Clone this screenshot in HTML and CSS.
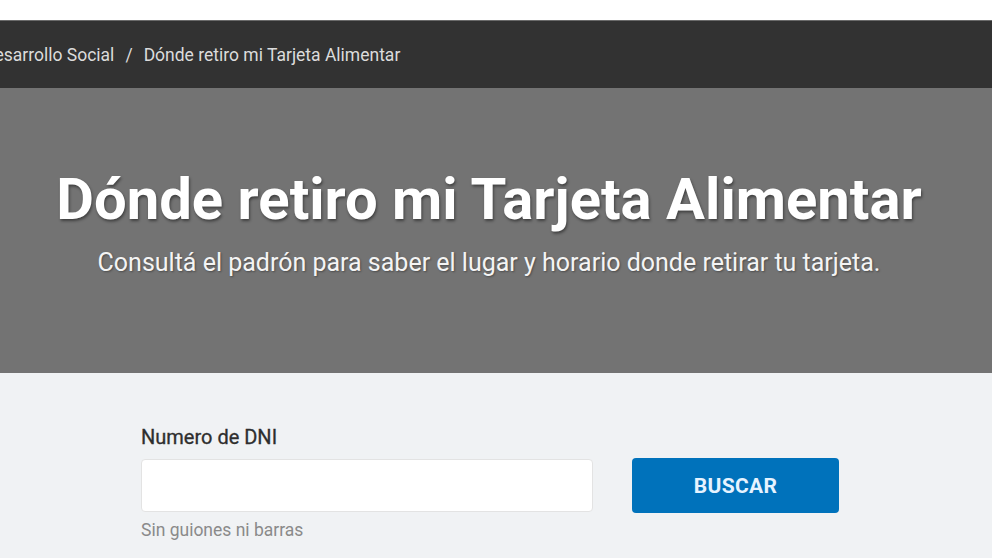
FILE: index.html
```html
<!DOCTYPE html>
<html lang="es">
<head>
  <meta charset="UTF-8">
  <meta name="viewport" content="width=device-width, initial-scale=1.0">
  <title>Dónde retiro mi Tarjeta Alimentar</title>
  <link rel="stylesheet" href="styles.css">
</head>
<body>
  <div class="top"></div>

  <nav class="breadcrumb">
    <span class="crumbs">Desarrollo Social<span class="sep">/</span>Dónde retiro mi Tarjeta Alimentar</span>
  </nav>

  <header class="hero">
    <h1>Dónde retiro mi Tarjeta Alimentar</h1>
    <p>Consultá el padrón para saber el lugar y horario donde retirar tu tarjeta.</p>
  </header>

  <section class="consulta">
    <div class="form-row">
      <div class="campo">
        <label for="dni">Numero de DNI</label>
        <input type="text" id="dni">
        <small>Sin guiones ni barras</small>
      </div>
      <button class="btn-buscar">BUSCAR</button>
    </div>
  </section>
</body>
</html>
```

FILE: styles.css
```css
body { margin: 0; font-family: Roboto, "Liberation Sans", Arial, sans-serif; background: #f0f2f4; overflow: hidden; }
.top { height: 20px; background: #fff; }
.breadcrumb { height: 68px; background: #323232; border-top: 1px solid #6a6a6a; box-sizing: border-box; display: flex; align-items: center; overflow: hidden; }
.crumbs { margin-left: -17px; color: #dcdcdc; font-size: 17.5px; white-space: nowrap; }
.sep { margin: 0 11px; }
.hero { height: 285px; background: #737373; box-sizing: border-box; padding-top: 77px; text-align: center; color: #fff; }
.hero h1 { margin: 0 0 0 -14px; font-size: 58px; font-weight: 700; line-height: 68px; text-shadow: 1px 2px 3px rgba(0,0,0,0.45); }
.hero p { margin: 14px 0 0 -14px; font-size: 25px; line-height: 32px; color: #f4f4f4; text-shadow: 1px 1px 2px rgba(0,0,0,0.35); }
.consulta { padding: 52px 0 0 141px; }
.form-row { display: flex; align-items: flex-start; gap: 39px; }
.campo { display: flex; flex-direction: column; width: 452px; }
.campo label { font-size: 20px; font-weight: 400; color: #2e2e2e; line-height: 24px; margin-bottom: 10px; -webkit-text-stroke: 0.3px #2e2e2e; }
.campo input { height: 53px; box-sizing: border-box; border: 1px solid #e3e3e3; border-radius: 4px; background: #fff; font-size: 16px; padding: 0 12px; }
.campo small { font-size: 17.5px; line-height: 21px; color: #8a8a8a; margin-top: 8px; }
.btn-buscar { margin-top: 33px; width: 207px; height: 55px; background: #0072bb; color: #e6f3ff; border: none; border-radius: 4px; font-family: inherit; font-size: 21px; font-weight: 700; letter-spacing: 0.3px; cursor: pointer; }
```
